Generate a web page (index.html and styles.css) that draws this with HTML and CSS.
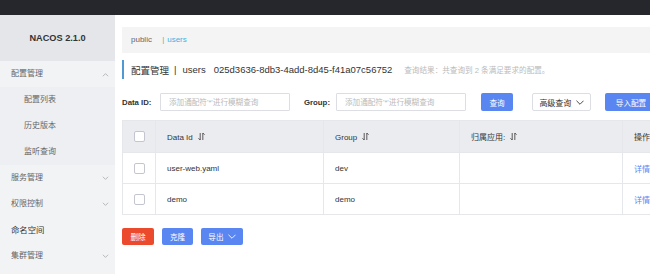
FILE: index.html
```html
<!DOCTYPE html>
<html lang="zh-CN">
  <head>
    <meta charset="UTF-8" />
    <title>Nacos 配置管理</title>
    <link rel="stylesheet" href="styles.css">
  </head>
  <body>
    <div class="topbar"></div>
    <div class="layout">
      <div class="sidebar">
        <div class="brand">NACOS 2.1.0</div>
        <div class="menu-item open">配置管理
          <svg class="chev" viewBox="0 0 8 5"><polyline points="1,4.5 4,1.5 7,4.5" /></svg>
        </div>
        <div class="submenu">
          <div class="sub-item">配置列表</div>
          <div class="sub-item">历史版本</div>
          <div class="sub-item">监听查询</div>
        </div>
        <div class="menu-item">服务管理
          <svg class="chev" viewBox="0 0 8 5"><polyline points="1,0.5 4,3.5 7,0.5" /></svg>
        </div>
        <div class="menu-item">权限控制
          <svg class="chev" viewBox="0 0 8 5"><polyline points="1,0.5 4,3.5 7,0.5" /></svg>
        </div>
        <div class="menu-item leaf">命名空间</div>
        <div class="menu-item">集群管理
          <svg class="chev" viewBox="0 0 8 5"><polyline points="1,0.5 4,3.5 7,0.5" /></svg>
        </div>
      </div>
      <div class="main">
        <div class="crumbs">
          <span class="ns">public</span>
          <span class="sep">|</span><span class="ns-active">users</span>
        </div>
        <div class="title">
          <span>配置管理</span><span class="title-sep">|</span><span>users</span><span class="title-id">025d3636-8db3-4add-8d45-f41a07c56752</span>
          <span class="result">查询结果：共查询到 2 条满足要求的配置。</span>
        </div>
        <div class="search">
          <label class="label label-id" for="data-id">Data ID:</label>
          <input class="field" id="data-id" placeholder="添加通配符'*'进行模糊查询" />
          <label class="label label-group" for="group">Group:</label>
          <input class="field" id="group" placeholder="添加通配符'*'进行模糊查询" />
          <button class="btn primary btn-query">查询</button>
          <button class="btn normal btn-adv">高级查询
            <svg class="down" viewBox="0 0 9 5"><polyline points="0.5,0.5 4.5,4.5 8.5,0.5" /></svg>
          </button>
          <button class="btn primary btn-import">导入配置</button>
        </div>
        <table class="config-table">
          <colgroup>
            <col style="width: 33px">
            <col style="width: 168px">
            <col style="width: 136px">
            <col style="width: 163px">
            <col style="width: 60px">
          </colgroup>
          <thead>
            <tr>
              <th class="check"><span class="box"></span></th>
              <th>Data Id <svg class="sort" viewBox="0 0 8 10"><path d="M2.5 1V9L0.5 7M5.5 9V1L7.5 3" /></svg></th>
              <th>Group <svg class="sort" viewBox="0 0 8 10"><path d="M2.5 1V9L0.5 7M5.5 9V1L7.5 3" /></svg></th>
              <th>归属应用: <svg class="sort" viewBox="0 0 8 10"><path d="M2.5 1V9L0.5 7M5.5 9V1L7.5 3" /></svg></th>
              <th>操作</th>
            </tr>
          </thead>
          <tbody>
            <tr>
              <td class="check"><span class="box"></span></td>
              <td>user-web.yaml</td>
              <td>dev</td>
              <td></td>
              <td><a class="link">详情</a></td>
            </tr>
            <tr>
              <td class="check"><span class="box"></span></td>
              <td>demo</td>
              <td>demo</td>
              <td></td>
              <td><a class="link">详情</a></td>
            </tr>
          </tbody>
        </table>
        <div class="actions">
          <button class="btn danger btn-del">删除</button>
          <button class="btn primary btn-clone">克隆</button>
          <button class="btn primary btn-export">导出
            <svg class="down" viewBox="0 0 9 5"><polyline points="0.5,0.5 4.5,4.5 8.5,0.5" /></svg>
          </button>
        </div>
      </div>
    </div>
  </body>
</html>
```

FILE: styles.css
```css
body {
  margin: 0;
  font-family: "Liberation Sans", "Noto Sans CJK SC", sans-serif;
  font-size: 8px;
  color: #333;
  background-color: #fff;
  overflow: hidden;
  height: 274px;
}
.topbar {
  height: 15px;
  background-color: #25272c;
}
.layout {
  display: flex;
  height: 259px;
}
.sidebar {
  width: 115px;
  flex-shrink: 0;
  background-color: #f2f3f5;
}
.brand {
  height: 46px;
  line-height: 46px;
  text-align: center;
  font-weight: bold;
  font-size: 9.2px;
  color: #333;
  background-color: #e4e6ea;
}
.menu-item {
  position: relative;
  height: 26px;
  line-height: 26px;
  padding-left: 11px;
  color: #666;
}
.menu-item.leaf {
  color: #333;
  font-size: 8.4px;
}
.chev {
  position: absolute;
  right: 6px;
  top: 11px;
  width: 7px;
  height: 5px;
  fill: none;
  stroke: #aaa;
  stroke-width: 0.9;
}
.submenu {
  background-color: #eeeff2;
}
.sub-item {
  height: 26px;
  line-height: 26px;
  padding-left: 24px;
  color: #666;
}
.main {
  flex: 1;
  min-width: 0;
  padding: 12px 0 0 7px;
  overflow: hidden;
}
.crumbs {
  height: 26px;
  line-height: 26px;
  padding-left: 9px;
  background-color: #f4f4f4;
  color: #666;
  white-space: nowrap;
}
.crumbs .sep {
  margin-left: 8px;
  margin-right: 3px;
  color: #999;
}
.crumbs .ns-active {
  color: #3fb1e3;
}
.title {
  display: flex;
  align-items: center;
  height: 19px;
  margin-top: 7px;
  padding-left: 7px;
  border-left: 2px solid #4f9ad2;
  font-size: 9.5px;
  color: #333;
  white-space: nowrap;
}
.title-sep {
  margin: 0 6px 0 5px;
}
.title-id {
  margin-left: 8px;
}
.result {
  margin-left: 12px;
  font-size: 7.6px;
  color: #bbb;
}
.search {
  display: flex;
  align-items: center;
  height: 18px;
  margin-top: 14px;
  white-space: nowrap;
}
.label {
  flex-shrink: 0;
  font-weight: bold;
  color: #333;
  font-size: 7.8px;
}
.label-id {
  width: 38px;
}
.label-group {
  width: 32px;
  margin-left: 14px;
}
.field {
  width: 130px;
  height: 18px;
  flex-shrink: 0;
  box-sizing: border-box;
  padding: 0 8px;
  border: 1px solid #dcdee3;
  border-radius: 1px;
  font-family: inherit;
  font-size: 7.6px;
  color: #333;
  outline: none;
}
.field::placeholder {
  color: #bbb;
}
.btn {
  height: 18px;
  box-sizing: border-box;
  border: none;
  border-radius: 2px;
  padding: 0;
  font-family: inherit;
  font-size: 7.6px;
  flex-shrink: 0;
  cursor: pointer;
}
.primary {
  background-color: #5a86f2;
  color: #fff;
}
.danger {
  background-color: #ec4a2c;
  color: #fff;
}
.normal {
  background-color: #fff;
  color: #333;
  border: 1px solid #dcdee3;
}
.btn-query {
  width: 32px;
  margin-left: 15px;
}
.btn-adv {
  width: 59px;
  margin-left: 19px;
  font-size: 8px;
}
.btn-import {
  width: 52px;
  margin-left: 14px;
}
.down {
  width: 8px;
  height: 5px;
  margin-left: 2px;
  vertical-align: 1px;
  fill: none;
  stroke: currentColor;
  stroke-width: 1;
}
.config-table {
  margin-top: 9px;
  width: 560px;
  table-layout: fixed;
  border-collapse: collapse;
  border: 1px solid #e6e7eb;
}
.config-table th,
.config-table td {
  padding: 0 0 0 11px;
  text-align: left;
  border-left: 1px solid #e6e7eb;
  border-bottom: 1px solid #e6e7eb;
  white-space: nowrap;
  overflow: hidden;
}
.config-table th {
  height: 31px;
  background-color: #ebecf0;
  font-weight: normal;
  color: #333;
}
.config-table td {
  height: 30px;
  color: #333;
}
.config-table .check {
  padding: 0;
  text-align: center;
}
.box {
  display: inline-block;
  width: 9px;
  height: 9px;
  border: 1px solid #c4c6cf;
  border-radius: 2px;
  background-color: #fff;
  vertical-align: middle;
}
.sort {
  width: 7px;
  height: 9px;
  margin-left: 3px;
  vertical-align: -1px;
  fill: none;
  stroke: #333;
  stroke-width: 0.9;
}
.link {
  color: #5a86f2;
}
.actions {
  display: flex;
  gap: 8px;
  margin-top: 13px;
}
.actions .btn {
  height: 17px;
}
.btn-del {
  width: 32px;
}
.btn-clone {
  width: 31px;
}
.btn-export {
  width: 42px;
}
```
